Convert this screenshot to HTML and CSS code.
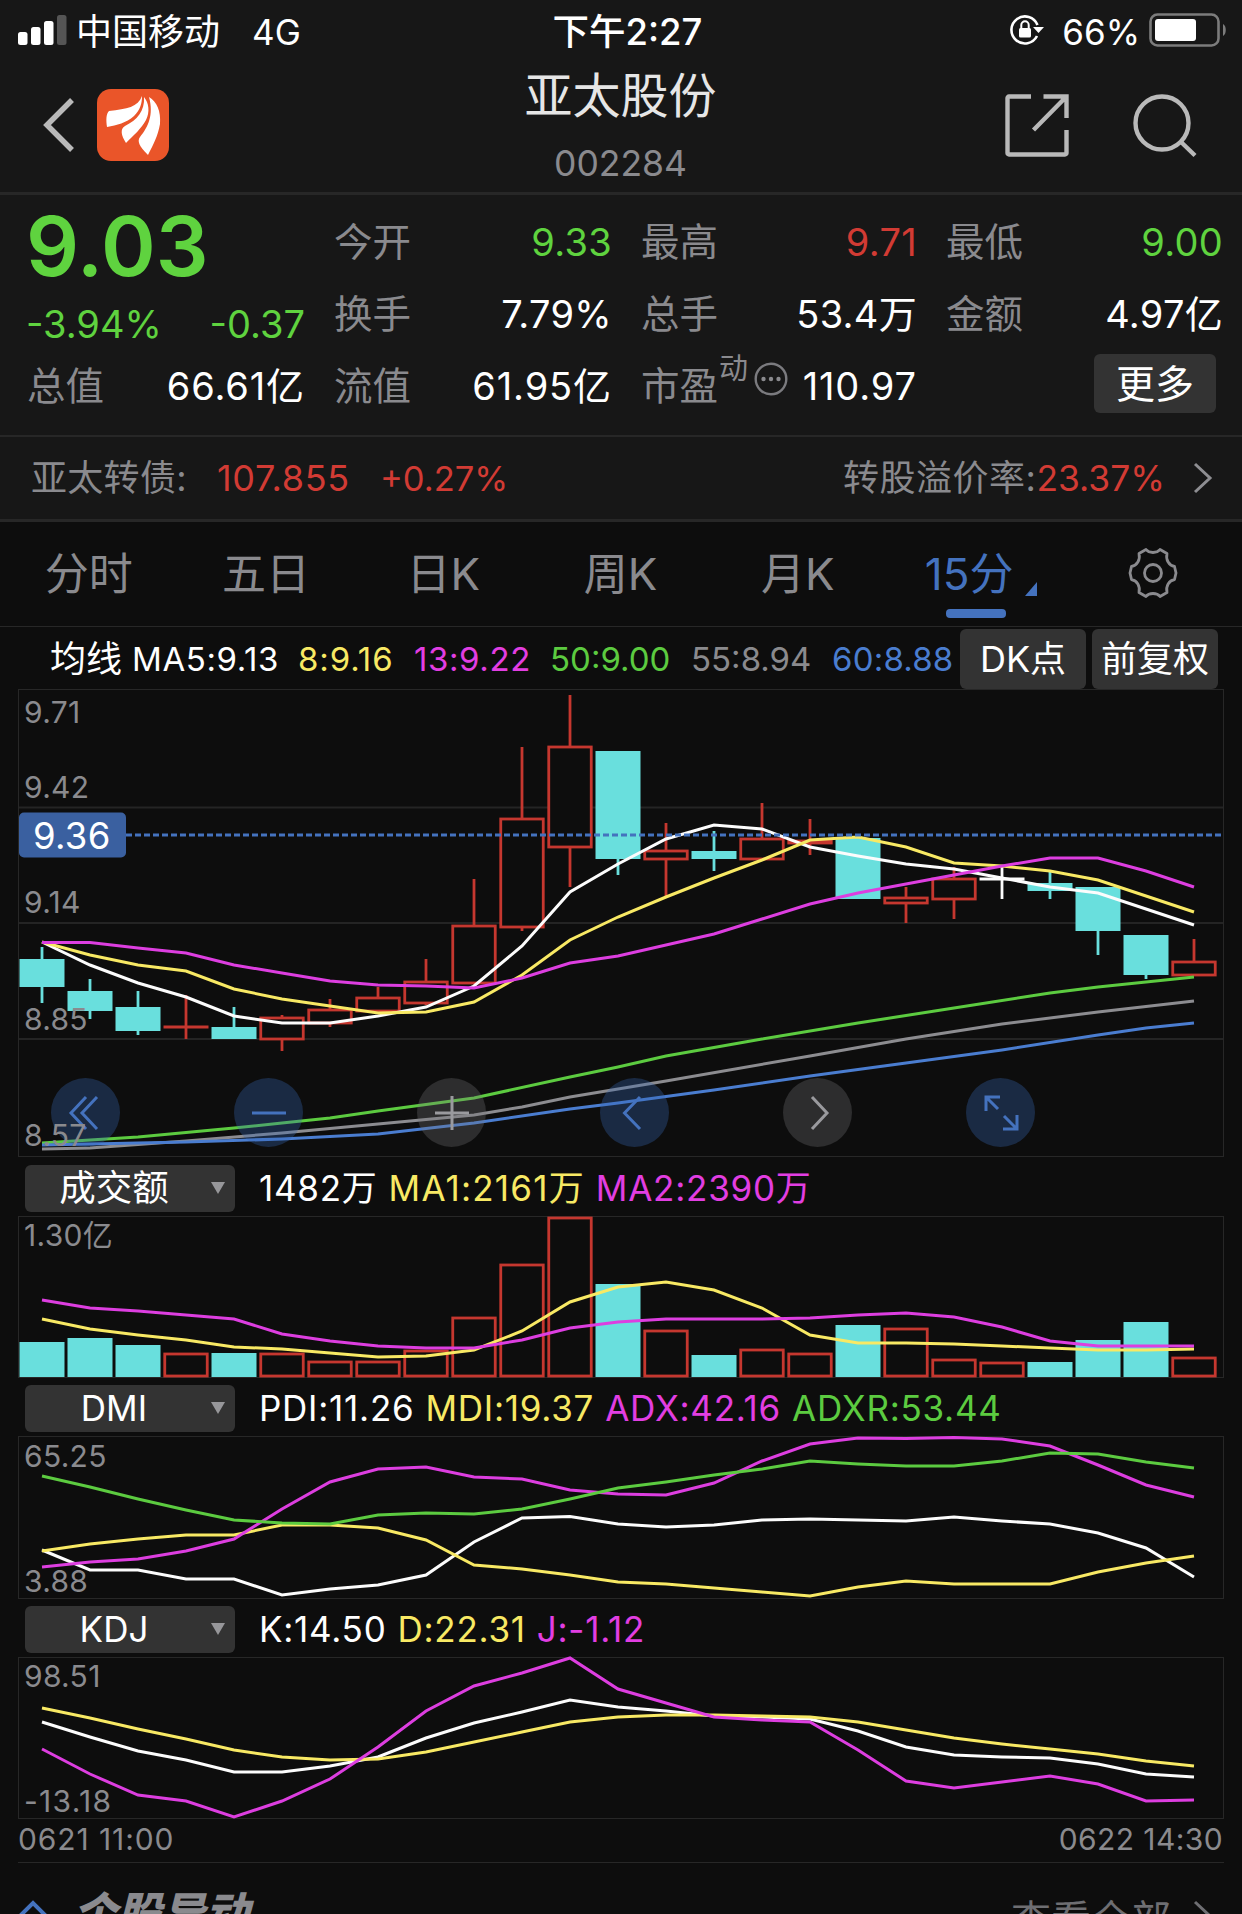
FILE: index.html
```html
<!DOCTYPE html>
<html lang="zh-CN">
<head>
    <meta charset="UTF-8">
    <meta name="viewport" content="width=device-width, initial-scale=1.0">
    <title>亚太股份 002284</title>
    <link rel="stylesheet" href="styles.css">
</head>
<body>

    <div class="status-bar">
        <div class="status-left">
            <svg class="signal" width="50" height="30" viewBox="0 0 50 30">
                <rect x="0" y="17" width="9.5" height="13" rx="2.5" fill="#fff"/>
                <rect x="13" y="12" width="9.5" height="18" rx="2.5" fill="#fff"/>
                <rect x="26" y="6" width="9.5" height="24" rx="2.5" fill="#fff"/>
                <rect x="39" y="0" width="9.5" height="30" rx="2.5" fill="#555"/>
            </svg>
            <span class="carrier">中国移动</span>
            <span class="network">4G</span>
        </div>
        <div class="clock">下午2:27</div>
        <div class="status-right">
            <svg class="lock" width="36" height="32" viewBox="0 0 36 32">
                <path d="M28 22 A13.5 13.5 0 1 1 28.5 11" fill="none" stroke="#fff" stroke-width="2.6"/>
                <path d="M24 13 H35 L29.5 19 Z" fill="#fff"/>
                <rect x="10" y="14" width="12" height="9.5" rx="1.5" fill="#fff"/>
                <path d="M12.3 15 V11 a3.7 3.7 0 0 1 7.4 0 V15" fill="none" stroke="#fff" stroke-width="2"/>
            </svg>
            <span class="percent">66%</span>
            <svg class="battery" width="78" height="34" viewBox="0 0 78 34">
                <rect x="1.5" y="1.5" width="68" height="31" rx="7" fill="none" stroke="#7c7c7c" stroke-width="2.6"/>
                <rect x="6" y="6" width="41" height="22" rx="3" fill="#fff"/>
                <path d="M74 11 a4.5 6.5 0 0 1 0 12 Z" fill="#7c7c7c"/>
            </svg>
        </div>
    </div>

    <div class="header">
        <div class="header-left">
            <svg width="34" height="58" viewBox="0 0 34 58">
                <path d="M30 4 L5 29 L30 54" fill="none" stroke="#b9b9b9" stroke-width="5.5"/>
            </svg>
            <svg class="logo" width="72" height="72" viewBox="0 0 72 72">
                <rect width="72" height="72" rx="14" fill="#ea5529"/>
                <path d="M45 7 C41 18 30 20 12 22 C9 25 9 31 10 38 C20 36 29 34 37 27 C43 21 45 15 45 7 Z" fill="#fff"/>
                <path d="M47 8 C48 22 40 31 28 37 C23 40 24 46 29 54 C37 46 44 40 49 31 C53 23 52 14 47 8 Z" fill="#fff"/>
                <path d="M52 8 C57 26 51 38 43 48 C40 52 42 57 51 66 C56 56 61 47 63 35 C64 22 60 13 52 8 Z" fill="#fff"/>
            </svg>
        </div>
        <div class="header-title">
            <h1>亚太股份</h1>
            <p>002284</p>
        </div>
        <div class="header-right">
            <svg width="64" height="64" viewBox="0 0 64 64" fill="none" stroke="#b9b9b9" stroke-width="4.4">
                <path d="M26 2.5 H4 a1.5 1.5 0 0 0 -1.5 1.5 V59 a1.5 1.5 0 0 0 1.5 1.5 H60 a1.5 1.5 0 0 0 1.5 -1.5 V36"/>
                <path d="M38.5 2.5 H61.5 V24 M60.5 3.5 L28.5 36"/>
            </svg>
            <svg width="64" height="64" viewBox="0 0 64 64" fill="none" stroke="#b9b9b9" stroke-width="4.4">
                <circle cx="29" cy="29" r="26.5"/>
                <path d="M47 47 L62 61.5"/>
            </svg>
        </div>
    </div>

    <div class="quote">
        <div class="price-box">
            <div class="price">9.03</div>
            <div class="change"><span>-3.94%</span><span>-0.37</span></div>
        </div>
        <div class="item"><label>今开</label><b class="green">9.33</b></div>
        <div class="item"><label>最高</label><b class="red">9.71</b></div>
        <div class="item"><label>最低</label><b class="green">9.00</b></div>
        <div class="item"><label>换手</label><b>7.79%</b></div>
        <div class="item"><label>总手</label><b>53.4万</b></div>
        <div class="item"><label>金额</label><b>4.97亿</b></div>
        <div class="item"><label>总值</label><b class="wide">66.61亿</b></div>
        <div class="item"><label>流值</label><b class="wide">61.95亿</b></div>
        <div class="item">
            <label>市盈</label>
            <sup>动</sup>
            <svg class="dots" width="34" height="34" viewBox="0 0 34 34">
                <circle cx="17" cy="17" r="15.3" fill="none" stroke="#7b7b7f" stroke-width="2.4"/>
                <circle cx="9.5" cy="17" r="2.2" fill="#8a8a8e"/>
                <circle cx="17" cy="17" r="2.2" fill="#8a8a8e"/>
                <circle cx="24.5" cy="17" r="2.2" fill="#8a8a8e"/>
            </svg>
            <b class="wide">110.97</b>
        </div>
        <div class="item"><button type="button" class="more">更多</button></div>
    </div>

    <div class="bond">
        <span class="bond-name">亚太转债:</span>
        <span class="red bond-price">107.855</span>
        <span class="red bond-rate">+0.27%</span>
        <span class="premium">转股溢价率:<span class="red">23.37%</span></span>
        <svg width="22" height="32" viewBox="0 0 22 32">
            <path d="M3 2 L18 16 L3 30" fill="none" stroke="#8e8e92" stroke-width="3"/>
        </svg>
    </div>

    <div class="tabs">
        <div class="tab">分时</div>
        <div class="tab">五日</div>
        <div class="tab">日K</div>
        <div class="tab">周K</div>
        <div class="tab">月K</div>
        <div class="tab active">15分</div>
        <div class="tab">
            <svg class="gear" width="52" height="52" viewBox="0 0 52 52" fill="none" stroke="#8a8a8e" stroke-width="2.8">
                <path d="M19 2.5 C22 6.5 30 6.5 33 2.5 L40 6.5 C38.5 13 42 18.5 47.5 19.5 L49 26 L47.5 32.5 C42 33.5 38.5 39 40 45.5 L33 49.5 C30 45.5 22 45.5 19 49.5 L12 45.5 C13.5 39 10 33.5 4.5 32.5 L3 26 L4.5 19.5 C10 18.5 13.5 13 12 6.5 Z" stroke-linejoin="round"/>
                <circle cx="26" cy="26" r="8.5"/>
            </svg>
        </div>
    </div>

    <div class="ma-row">
        <span class="ma-name">均线</span>
        <span class="ma5">MA5:9.13</span>
        <span class="ma8">8:9.16</span>
        <span class="ma13">13:9.22</span>
        <span class="ma50">50:9.00</span>
        <span class="ma55">55:8.94</span>
        <span class="ma60">60:8.88</span>
        <button type="button">DK点</button>
        <button type="button">前复权</button>
    </div>

    <div class="chart-box">
        <svg class="chart" id="kline" width="1206" height="468" viewBox="18 689 1206 468">
            <rect class="frame" x="18.5" y="689.5" width="1205" height="467"/>
            <path class="grid" d="M19 807.5 H1223 M19 923 H1223 M19 1039 H1223"/>
        </svg>
        <div class="tools">
            <div class="tool">
                <svg width="40" height="40" viewBox="0 0 40 40"><path d="M20 4 L5 20 L20 36 M31 4 L16 20 L31 36"/></svg>
            </div>
            <div class="tool">
                <svg width="40" height="40" viewBox="0 0 40 40"><path d="M3 20 H37"/></svg>
            </div>
            <div class="tool gray">
                <svg width="40" height="40" viewBox="0 0 40 40"><path d="M3 20 H37 M20 3 V37"/></svg>
            </div>
            <div class="tool">
                <svg width="40" height="40" viewBox="0 0 40 40"><path d="M25 4 L9.5 20 L25 36"/></svg>
            </div>
            <div class="tool gray">
                <svg width="40" height="40" viewBox="0 0 40 40"><path d="M14 4 L29 20 L14 36"/></svg>
            </div>
            <div class="tool">
                <svg width="40" height="40" viewBox="0 0 40 40"><path d="M5 18 V4 H19 M5 4 L17 16 M36 22 V36 H22 M36 36 L23 23"/></svg>
            </div>
        </div>
        <svg class="chart labels" width="1206" height="468" viewBox="18 689 1206 468">
            <text x="24" y="723">9.71</text>
            <text x="24" y="798">9.42</text>
            <text x="24" y="913">9.14</text>
            <text x="24" y="1030">8.85</text>
            <text x="24" y="1146">8.57</text>
            <path class="now-line" d="M126 835 H1222"/>
            <rect class="now-bg" x="19" y="812.5" width="107" height="45" rx="5"/>
            <text class="now" x="33" y="849">9.36</text>
        </svg>
    </div>

    <div class="ind-row">
        <div class="select"><span class="cn">成交额</span></div>
        <span class="white">1482万</span>
        <span class="yellow ma1">MA1:2161万</span>
        <span class="magenta">MA2:2390万</span>
    </div>
    <svg class="chart" id="volume" width="1206" height="161" viewBox="18 1216 1206 161">
        <rect class="frame" x="18.5" y="1216.5" width="1205" height="161"/>
        <text x="24" y="1246">1.30亿</text>
    </svg>

    <div class="ind-row">
        <div class="select"><span>DMI</span></div>
        <span class="white">PDI:11.26</span>
        <span class="yellow">MDI:19.37</span>
        <span class="magenta">ADX:42.16</span>
        <span class="lime">ADXR:53.44</span>
    </div>
    <svg class="chart" id="dmi" width="1206" height="162" viewBox="18 1436 1206 162">
        <rect class="frame" x="18.5" y="1436.5" width="1205" height="162"/>
        <text x="24" y="1467">65.25</text>
        <text x="24" y="1592">3.88</text>
    </svg>

    <div class="ind-row">
        <div class="select"><span>KDJ</span></div>
        <span class="white">K:14.50</span>
        <span class="yellow">D:22.31</span>
        <span class="magenta">J:-1.12</span>
    </div>
    <svg class="chart" id="kdj" width="1206" height="161" viewBox="18 1657 1206 161">
        <rect class="frame" x="18.5" y="1657.5" width="1205" height="161"/>
        <text x="24" y="1687">98.51</text>
        <text x="24" y="1812" class="low">-13.18</text>
    </svg>

    <div class="dates">
        <span class="from">0621 11:00</span>
        <span>0622 14:30</span>
    </div>

    <div class="news">
        <svg width="30" height="30" viewBox="0 0 30 30">
            <path d="M3 15 L15 3 L27 15 L15 27 Z" fill="none" stroke="#4472be" stroke-width="4"/>
        </svg>
        <span class="news-title">个股异动</span>
        <span class="news-all">查看全部</span>
        <svg width="22" height="32" viewBox="0 0 22 32">
            <path d="M3 2 L18 16 L3 30" fill="none" stroke="#6e6e72" stroke-width="3"/>
        </svg>
    </div>

    <script>
        const NS = 'http://www.w3.org/2000/svg';
        const FIRST_X = 42;
        const STEP = 48;
        const BAR = 45;

        const colors = {
            red: '#c5372f',
            cyan: '#69dfdd',
            white: '#fcfcfc',
            yellow: '#f8e964',
            magenta: '#dd3ee0',
            green: '#5ccb40',
            gray: '#8c8c90',
            blue: '#4a7dd0'
        };

        // color, high, top, bottom, low
        const candles = [
            ['cyan', 947, 959, 987, 1003], ['cyan', 979, 991, 1011, 1019], ['cyan', 991, 1007, 1031, 1035],
            ['red', 995, 1027, 1027, 1039], ['cyan', 1007, 1027, 1039, 1039], ['red', 1015, 1018, 1039, 1051],
            ['red', 999, 1010, 1023, 1027], ['red', 987, 998, 1011, 1011], ['red', 959, 982, 1003, 1005],
            ['red', 879, 926, 983, 983], ['red', 747, 819, 927, 931], ['red', 695, 747, 847, 887],
            ['cyan', 751, 751, 859, 875], ['red', 823, 851, 859, 897], ['cyan', 831, 851, 859, 871],
            ['red', 803, 839, 859, 859], ['red', 819, 841, 843, 855], ['cyan', 838, 838, 899, 899],
            ['red', 887, 898, 903, 923], ['red', 867, 879, 899, 919], ['white', 867, 879, 879, 899],
            ['cyan', 872, 883, 891, 899], ['cyan', 887, 887, 931, 955], ['cyan', 935, 935, 975, 979],
            ['red', 939, 962, 975, 975]
        ];

        const volumes = [
            1342, 1338, 1345, 1354, 1353, 1354, 1362, 1362, 1351, 1318, 1265, 1218, 1284,
            1331, 1355, 1350, 1354, 1325, 1329, 1360, 1363, 1362, 1340, 1322, 1358
        ];

        function add(svg, name, attrs) {
            const el = document.createElementNS(NS, name);
            for (const key in attrs) {
                el.setAttribute(key, attrs[key]);
            }
            svg.appendChild(el);
        }

        function drawBar(svg, i, color, top, bottom) {
            const x = FIRST_X + i * STEP - BAR / 2;
            if (color === 'cyan') {
                add(svg, 'rect', { x: x, y: top, width: BAR, height: bottom - top, fill: colors.cyan });
            } else {
                add(svg, 'rect', {
                    x: x + 1.25, y: top, width: BAR - 2.5, height: bottom - top,
                    fill: '#0d0d0d', stroke: colors[color], 'stroke-width': 2.8
                });
            }
        }

        // one value per bar, or [index, value] pairs
        function drawLine(svg, color, values) {
            const points = values.map(function (v, i) {
                return Array.isArray(v) ? (FIRST_X + v[0] * STEP) + ',' + v[1] : (FIRST_X + i * STEP) + ',' + v;
            });
            add(svg, 'polyline', {
                points: points.join(' '), fill: 'none', stroke: colors[color], 'stroke-width': 3
            });
        }

        const kline = document.getElementById('kline');
        candles.forEach(function (c, i) {
            const x = FIRST_X + i * STEP;
            add(kline, 'path', { d: 'M' + x + ' ' + c[1] + ' V' + c[4], stroke: colors[c[0]], 'stroke-width': 2.8 });
            if (c[2] === c[3]) {
                add(kline, 'path', { d: 'M' + (x - 22.5) + ' ' + c[2] + ' H' + (x + 22.5), stroke: colors[c[0]], 'stroke-width': 2.8 });
            } else {
                drawBar(kline, i, c[0], c[2], c[3]);
            }
        });
        drawLine(kline, 'white', [942, 965, 983, 997, 1016, 1023, 1023, 1016, 1007, 986, 946, 892, 864, 839, 825, 829, 847, 856, 864, 869, 878, 887, 893, 909, 925]);
        drawLine(kline, 'yellow', [942, 955, 965, 971, 989, 999, 1006, 1013, 1012, 1002, 975, 940, 917, 897, 878, 860, 840, 837, 847, 863, 866, 871, 880, 896, 912]);
        drawLine(kline, 'magenta', [942.5, 942.5, 948, 953, 965, 973, 981, 985, 986, 988, 978, 963, 956, 945, 934, 919, 904, 893, 884, 875, 866, 858, 858, 871, 887]);
        drawLine(kline, 'green', [[0, 1143], [2, 1137], [4, 1128], [5, 1123], [6, 1118], [7, 1111], [9, 1098], [11, 1077], [12, 1067], [13, 1056], [15, 1039], [17, 1023], [19, 1008], [21, 993], [22, 987], [23, 982], [24, 977]]);
        drawLine(kline, 'gray', [[0, 1149], [1, 1148], [3, 1141], [5, 1133], [7, 1124], [9, 1115], [10, 1107], [11, 1097], [12, 1089], [13, 1081], [16, 1056], [18, 1039], [20, 1024], [22, 1012], [24, 1001]]);
        drawLine(kline, 'blue', [[0, 1145], [3, 1142], [5, 1139], [7, 1134], [9, 1123], [11, 1109], [12, 1103], [14, 1090], [16, 1076], [18, 1063], [20, 1050], [22, 1035], [23, 1028], [24, 1023]]);

        const volume = document.getElementById('volume');
        volumes.forEach(function (top, i) {
            const color = candles[i][0] === 'cyan' ? 'cyan' : 'red';
            drawBar(volume, i, color, top, color === 'cyan' ? 1377 : 1376);
        });
        drawLine(volume, 'yellow', [1319, 1329, 1335, 1340, 1347, 1349, 1353, 1357, 1356, 1350, 1331, 1302, 1287, 1282, 1290, 1308, 1335, 1343, 1343, 1344, 1346, 1348, 1350, 1350, 1349]);
        drawLine(volume, 'magenta', [1300, 1308, 1311, 1315, 1319, 1334, 1341, 1346, 1348, 1348, 1340, 1328, 1322, 1319, 1319, 1319, 1318, 1315, 1313, 1317, 1327, 1341, 1346, 1346, 1346]);

        const dmi = document.getElementById('dmi');
        drawLine(dmi, 'white', [1550, 1570, 1570, 1579, 1579, 1595, 1589, 1585, 1575, 1542, 1518, 1516.5, 1524, 1527, 1525, 1520, 1519, 1520, 1521, 1517, 1521, 1524, 1533, 1548, 1577]);
        drawLine(dmi, 'yellow', [1551, 1544, 1539, 1535, 1535, 1525, 1525, 1528, 1540, 1565, 1569, 1575, 1582, 1584, 1588, 1592, 1596, 1587, 1581, 1584, 1584, 1584, 1572, 1563, 1556]);
        drawLine(dmi, 'magenta', [1567, 1562, 1559, 1551, 1539, 1509, 1482, 1469, 1467, 1477, 1479, 1490, 1494, 1495, 1483, 1461, 1444, 1438, 1438.5, 1437.5, 1439, 1446, 1465, 1485, 1497]);
        drawLine(dmi, 'green', [1476, 1487, 1499, 1510, 1520, 1523, 1524, 1515, 1513, 1514, 1509, 1499, 1488, 1482, 1475, 1469, 1461, 1464, 1466, 1466, 1461, 1453, 1454, 1462, 1468]);

        const kdj = document.getElementById('kdj');
        drawLine(kdj, 'white', [1722, 1737, 1751, 1760, 1772, 1772, 1766, 1757, 1738, 1723, 1712, 1700, 1707, 1711, 1716, 1717, 1719, 1731, 1747, 1755, 1757, 1758, 1764, 1774, 1777]);
        drawLine(kdj, 'yellow', [1708, 1718, 1729, 1739, 1750, 1757, 1760, 1759, 1752, 1742, 1732, 1722, 1717, 1715, 1715, 1716, 1717, 1722, 1730, 1738, 1744, 1749, 1754, 1761, 1766]);
        drawLine(kdj, 'magenta', [1749, 1774, 1795, 1801, 1817, 1801, 1779, 1747, 1711, 1686, 1673, 1658, 1689, 1703, 1717, 1720, 1722, 1750, 1781, 1788, 1782, 1776, 1784, 1801, 1800]);
    </script>

</body>
</html>
```

FILE: styles.css
```css
* {
    box-sizing: border-box;
}

body {
    margin: 0;
    width: 1242px;
    height: 1914px;
    overflow: hidden;
    background-color: #0d0d0d;
    color: #fff;
    font-family: Inter, "Noto Sans CJK SC", sans-serif;
    font-weight: 400;
}

svg {
    display: block;
    flex: none;
}

button {
    font-family: inherit;
    color: #fff;
    background-color: #333;
    border: none;
    border-radius: 6px;
    padding: 0;
}

.red {
    color: #d23b34;
}

.green {
    color: #5fd33f;
}

/* status bar */
.status-bar {
    display: grid;
    grid-template-columns: 1fr 170px 1fr;
    align-items: center;
    height: 60px;
    padding: 0 15px 0 18px;
    background-color: #171717;
    font-size: 34px;
    line-height: 56px;
}

.status-left,
.status-right {
    display: flex;
    align-items: center;
}

.status-right {
    justify-content: flex-end;
}

.status-bar span,
.clock {
    padding-top: 4px;
}

.carrier {
    margin-left: 8px;
    font-size: 36px;
}

.network {
    margin-left: 32px;
    font-size: 35px;
}

.clock {
    padding-left: 10px;
    text-align: center;
    font-size: 36.5px;
    font-weight: 500;
    white-space: nowrap;
}

.percent {
    margin: 0 9px 0 17px;
    font-size: 35px;
}

/* header */
.header {
    display: grid;
    grid-template-columns: 1fr 240px 1fr;
    height: 135px;
    padding: 0 45px 0 42px;
    background-color: #171717;
    border-bottom: 3px solid #272727;
}

.header-left {
    display: flex;
    align-items: center;
    gap: 21px;
    height: 130px;
}

.header-title {
    padding-left: 2px;
    text-align: center;
}

.header-title h1 {
    margin: 0;
    font-size: 48px;
    font-weight: 400;
    line-height: 72px;
    color: #e6e6e6;
}

.header-title p {
    margin: 10px 0 0;
    font-size: 35.5px;
    line-height: 44px;
    color: #8a8a8e;
}

.header-right {
    display: flex;
    justify-content: flex-end;
    gap: 64px;
    padding-top: 34px;
}

/* quote */
.quote {
    display: grid;
    grid-template-columns: 277px 277px 275px 276px;
    grid-template-rows: 72px 72px 72px;
    column-gap: 30px;
    height: 242px;
    padding: 11px 0 0 28px;
    background-color: #171717;
    border-bottom: 2px solid #272727;
    font-size: 38px;
}

.price-box {
    grid-row: 1 / 3;
    margin-left: -2px;
    color: #5fd33f;
}

.price {
    font-size: 83px;
    font-weight: 600;
    line-height: 81px;
}

.change {
    display: flex;
    justify-content: space-between;
    font-size: 38px;
    line-height: 75px;
}

.item {
    display: flex;
    align-items: center;
    line-height: 73px;
}

.item label {
    margin-left: -1px;
    font-size: 38.5px;
    color: #8a8a8e;
}

.item b {
    margin-left: auto;
    font-weight: 400;
    letter-spacing: 0.3px;
}

.item b.wide {
    letter-spacing: 0.9px;
}

.item b.green {
    color: #5fd33f;
}

.item sup {
    align-self: flex-start;
    margin-left: 1px;
    font-size: 29px;
    line-height: 38px;
    color: #8a8a8e;
}

.dots {
    margin: -14px 0 0 6px;
}

.more {
    width: 122px;
    height: 59px;
    margin: -6px 7px 0 auto;
    font-size: 39px;
    line-height: 59px;
}

/* convertible bond */
.bond {
    display: flex;
    align-items: center;
    height: 85px;
    padding: 0 28px 0 31px;
    background-color: #171717;
    border-bottom: 3px solid #272727;
    font-size: 36px;
    line-height: 82px;
    color: #8a8a8e;
}

.bond-name {
    letter-spacing: 0.3px;
}

.bond-price {
    margin-left: 30px;
    letter-spacing: 0.7px;
}

.bond-rate {
    margin-left: 30px;
    font-size: 34.6px;
}

.premium {
    margin: 0 27px 0 auto;
    letter-spacing: 0.5px;
}

.premium .red {
    font-size: 35.4px;
    letter-spacing: 0;
}

/* tabs */
.tabs {
    display: grid;
    grid-template-columns: repeat(7, 1fr);
    height: 105px;
    padding: 0 0 0 1px;
    border-bottom: 1px solid #272727;
}

.tab {
    display: flex;
    align-items: center;
    justify-content: center;
    padding: 0 2px 6px 0;
    font-size: 44px;
    color: #8a8a8e;
}

.gear {
    margin: 4px 0 0 1px;
}

.tab.active {
    position: relative;
    padding-right: 14px;
    color: #4472be;
}

.tab.active::before {
    content: "";
    position: absolute;
    left: 59px;
    bottom: 8px;
    width: 60px;
    height: 9px;
    border-radius: 4px;
    background-color: #4472be;
}

.tab.active::after {
    content: "";
    position: absolute;
    right: 28px;
    bottom: 30px;
    border-left: 12px solid transparent;
    border-bottom: 14px solid #4472be;
}

/* moving averages */
.ma-row {
    display: flex;
    align-items: center;
    height: 62px;
    padding: 2px 24px 0 50px;
    font-size: 33px;
    line-height: 60px;
    white-space: nowrap;
}

.ma-name {
    width: 82px;
    font-size: 36px;
}

.ma5 {
    width: 166px;
    letter-spacing: 0.6px;
}

.ma8 {
    width: 116px;
    letter-spacing: 0.9px;
    color: #f8e964;
}

.ma13 {
    width: 136px;
    letter-spacing: 0.6px;
    color: #e23ee2;
}

.ma50 {
    width: 141px;
    color: #5ccb40;
}

.ma55 {
    width: 141px;
    color: #8a8a8e;
}

.ma60 {
    letter-spacing: 0.2px;
    color: #4a7dd0;
}

.ma-row button {
    width: 126px;
    height: 60px;
    margin-left: 6px;
    font-size: 36px;
    line-height: 60px;
}

.ma60 + button {
    margin-left: auto;
}

/* charts */
.chart {
    margin-left: 18px;
    overflow: visible;
}

.chart text {
    font-size: 30px;
    letter-spacing: 0.3px;
    fill: #8a8a8e;
}

.chart .low {
    letter-spacing: 1.3px;
}

.frame {
    fill: none;
    stroke: #272727;
    stroke-width: 1;
}

.grid {
    stroke: #242424;
    stroke-width: 2;
}

.chart-box {
    position: relative;
}

.labels {
    position: absolute;
    left: 0;
    top: 0;
}

.now-line {
    stroke: #4472be;
    stroke-width: 2.8;
    stroke-dasharray: 6 3;
}

.now-bg {
    fill: #3a60a0;
}

.chart .now {
    font-size: 36.5px;
    fill: #fff;
}

.tools {
    position: absolute;
    left: 51px;
    bottom: 10px;
    display: flex;
    gap: 114px;
}

.tool {
    display: flex;
    align-items: center;
    justify-content: center;
    width: 69px;
    height: 69px;
    border-radius: 50%;
    background-color: rgba(56, 103, 180, 0.33);
}

.tool path {
    fill: none;
    stroke: #4472be;
    stroke-width: 3;
}

.tool.gray {
    background-color: rgba(120, 120, 124, 0.3);
}

.tool.gray path {
    stroke: #9a9a9e;
}

/* indicator rows */
.ind-row {
    display: flex;
    align-items: center;
    height: 59px;
    padding: 3px 0 0 25px;
    font-size: 35px;
    line-height: 56px;
    white-space: nowrap;
}

.ind-row > span {
    margin-right: 11px;
    letter-spacing: 0.75px;
}

.ind-row > .ma1 {
    letter-spacing: 1.2px;
}

.select {
    display: flex;
    align-items: center;
    width: 210px;
    height: 47px;
    margin-right: 24px;
    padding-right: 10px;
    border-radius: 6px;
    background-color: #333;
}

.select span {
    flex: 1;
    padding-right: 8px;
    text-align: center;
}

.select .cn {
    font-size: 36.5px;
}

.select::after {
    content: "";
    border-left: 7px solid transparent;
    border-right: 7px solid transparent;
    border-top: 12px solid #97979a;
}

.yellow {
    color: #f8e964;
}

.magenta {
    color: #e23ee2;
}

.lime {
    color: #5ccb40;
}

.dates {
    display: flex;
    justify-content: space-between;
    height: 45px;
    margin: 0 18px;
    padding: 0 1px 0 0;
    border-bottom: 1px solid #272727;
    font-size: 30px;
    line-height: 43px;
    letter-spacing: 0.4px;
    color: #8a8a8e;
}

.dates .from {
    letter-spacing: 0.9px;
}

/* news */
.news {
    display: flex;
    align-items: flex-start;
    padding: 24px 28px 0 18px;
    color: #8a8a8e;
}

.news svg {
    margin-top: 13px;
}

.news-title {
    margin-left: 25px;
    font-size: 44px;
    font-weight: 900;
    font-style: italic;
    line-height: 53px;
}

.news-all {
    margin: 5px 21px 0 auto;
    font-size: 40px;
    line-height: 56px;
    color: #6e6e72;
}
```
